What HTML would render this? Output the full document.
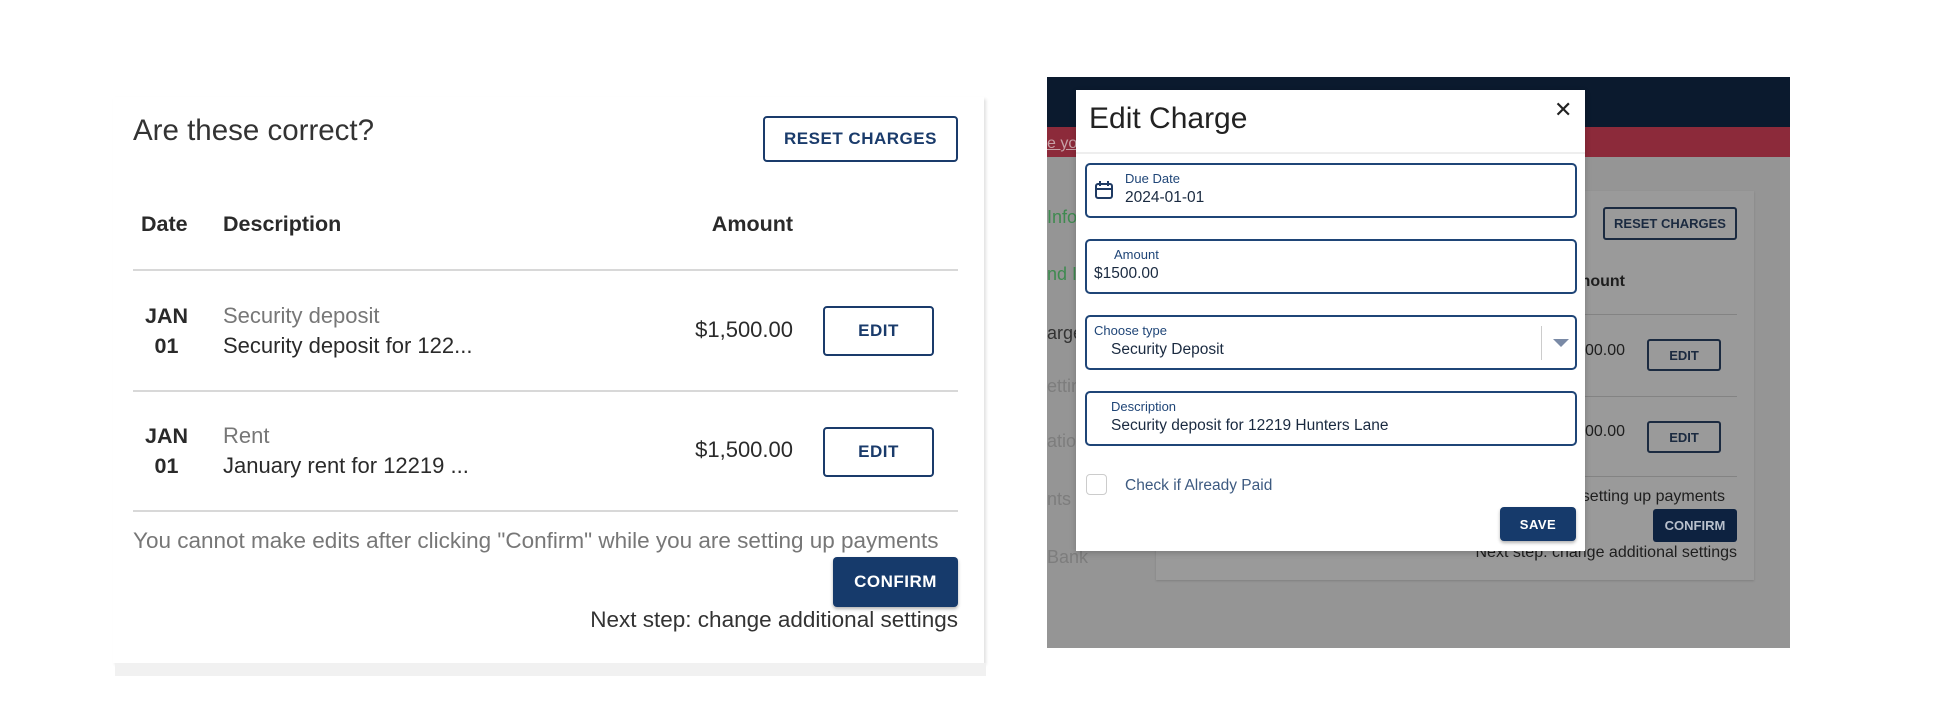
<!DOCTYPE html>
<html><head><meta charset="utf-8"><style>
*{margin:0;padding:0;box-sizing:border-box}
body{width:1953px;height:724px;background:#fff;position:relative;overflow:hidden;font-family:"Liberation Sans",sans-serif;color:#2a2a2a}
.a{position:absolute;white-space:nowrap}
.btnO{position:absolute;border:2px solid #1a3b6b;border-radius:4px;color:#1a3b6b;font-weight:bold;display:flex;align-items:center;justify-content:center;letter-spacing:.5px;background:#fff}
.btnF{position:absolute;background:#163a6b;border-radius:4px;color:#fff;font-weight:bold;display:flex;align-items:center;justify-content:center;letter-spacing:.5px;box-shadow:0 2px 3px rgba(0,0,0,.3)}
.ln{position:absolute;height:2px;background:#d8d8d8}
.fld{position:absolute;left:1085px;width:492px;height:55px;border:2px solid #1f4577;border-radius:5px;background:#fff}
.lbl{position:absolute;font-size:13px;color:#1f4577}
.val{position:absolute;font-size:15.5px;color:#1a2a40}
</style></head><body>
<!-- left card -->
<div class="a" style="left:113px;top:97px;width:871px;height:566px;background:#fff;box-shadow:2px 2px 3px rgba(0,0,0,.12)"></div>
<div class="a" style="left:115px;top:663px;width:871px;height:13px;background:#f1f1f1"></div>
<div class="a" style="left:133px;top:114px;font-size:29.5px;color:#333">Are these correct?</div>
<div class="btnO" style="left:763px;top:116px;width:195px;height:46px;font-size:17px">RESET CHARGES</div>
<div class="a" style="left:141px;top:212px;font-size:21.5px;font-weight:bold">Date</div>
<div class="a" style="left:223px;top:212px;font-size:21.5px;font-weight:bold">Description</div>
<div class="a" style="right:1160px;top:212px;font-size:21.5px;font-weight:bold">Amount</div>
<div class="ln" style="left:133px;top:269px;width:825px"></div>
<div class="a" style="left:145px;top:301px;font-size:21.5px;font-weight:bold;text-align:center;line-height:30px">JAN<br>01</div>
<div class="a" style="left:223px;top:301px;font-size:22px;color:#777;line-height:30px">Security deposit</div>
<div class="a" style="left:223px;top:331px;font-size:22px;line-height:30px">Security deposit for 122...</div>
<div class="a" style="right:1160px;top:317px;font-size:22px;line-height:26px">$1,500.00</div>
<div class="btnO" style="left:823px;top:306px;width:111px;height:50px;font-size:17px">EDIT</div>
<div class="ln" style="left:133px;top:390px;width:825px"></div>
<div class="a" style="left:145px;top:421px;font-size:21.5px;font-weight:bold;text-align:center;line-height:30px">JAN<br>01</div>
<div class="a" style="left:223px;top:421px;font-size:22px;color:#777;line-height:30px">Rent</div>
<div class="a" style="left:223px;top:451px;font-size:22px;line-height:30px">January rent for 12219 ...</div>
<div class="a" style="right:1160px;top:437px;font-size:22px;line-height:26px">$1,500.00</div>
<div class="btnO" style="left:823px;top:427px;width:111px;height:50px;font-size:17px">EDIT</div>
<div class="ln" style="left:133px;top:510px;width:825px"></div>
<div class="a" style="left:133px;top:528px;font-size:22.5px;color:#777">You cannot make edits after clicking "Confirm" while you are setting up payments</div>
<div class="btnF" style="left:833px;top:557px;width:125px;height:50px;font-size:17px">CONFIRM</div>
<div class="a" style="right:995px;top:607px;font-size:22.5px;color:#333">Next step: change additional settings</div>

<!-- right screenshot -->
<div class="a" style="left:1047px;top:77px;width:743px;height:571px;background:#959595;overflow:hidden">
 <div class="a" style="left:0;top:0;width:743px;height:50px;background:#0b1a2e"></div>
 <div class="a" style="left:0;top:50px;width:743px;height:30px;background:#8c2a3a"></div>
 <div class="a" style="left:0;top:58px;font-size:16px;color:#c6a0a6;text-decoration:underline">e you</div>
 <div class="a" style="left:0;top:130px;font-size:18px;color:#3f8a50">Info</div>
 <div class="a" style="left:0;top:187px;font-size:18px;color:#3f8a50">nd I</div>
 <div class="a" style="left:0;top:246px;font-size:18px;color:#333">arge</div>
 <div class="a" style="left:0;top:299px;font-size:18px;color:#7d7d7d">ettin</div>
 <div class="a" style="left:0;top:354px;font-size:18px;color:#7d7d7d">atio</div>
 <div class="a" style="left:0;top:412px;font-size:18px;color:#7d7d7d">nts</div>
 <div class="a" style="left:0;top:470px;font-size:18px;color:#7d7d7d">Bank</div>
 <div class="a" style="left:109px;top:114px;width:598px;height:389px;background:#9a9a9a;box-shadow:0 1px 2px rgba(0,0,0,.15)"></div>
 <div class="a" style="left:556px;top:130px;width:134px;height:33px;border:2px solid #1b2a40;border-radius:3px;font-size:13px;font-weight:bold;color:#1b2a40;display:flex;align-items:center;justify-content:center">RESET CHARGES</div>
 <div class="a" style="right:165px;top:196px;font-size:16px;font-weight:bold;color:#1e1e1e">Amount</div>
 <div class="a" style="left:500px;top:237px;width:190px;height:1px;background:#838383"></div>
 <div class="a" style="left:500px;top:319px;width:190px;height:1px;background:#838383"></div>
 <div class="a" style="left:500px;top:399px;width:190px;height:1px;background:#838383"></div>
 <div class="a" style="right:165px;top:265px;font-size:16px;color:#1e1e1e">$1,500.00</div>
 <div class="a" style="right:165px;top:346px;font-size:16px;color:#1e1e1e">$1,500.00</div>
 <div class="a" style="left:600px;top:262px;width:74px;height:32px;border:2px solid #1b2a40;border-radius:3px;font-size:13px;font-weight:bold;color:#1b2a40;display:flex;align-items:center;justify-content:center">EDIT</div>
 <div class="a" style="left:600px;top:344px;width:74px;height:32px;border:2px solid #1b2a40;border-radius:3px;font-size:13px;font-weight:bold;color:#1b2a40;display:flex;align-items:center;justify-content:center">EDIT</div>
 <div class="a" style="right:65px;top:411px;font-size:16px;color:#1e1e1e">while you are setting up payments</div>
 <div class="a" style="left:606px;top:432px;width:84px;height:33px;background:#0d2240;border-radius:3px;font-size:13px;font-weight:bold;color:#b8c0cc;display:flex;align-items:center;justify-content:center">CONFIRM</div>
 <div class="a" style="right:53px;top:467px;font-size:16px;color:#1e1e1e">Next step: change additional settings</div>
</div>

<!-- modal -->
<div class="a" style="left:1076px;top:90px;width:509px;height:461px;background:#fff;box-shadow:0 2px 6px rgba(0,0,0,.2)"></div>
<div class="a" style="left:1089px;top:102px;font-size:30px;color:#222">Edit Charge</div>
<div class="a" style="left:1554px;top:97px;font-size:22px;color:#222">✕</div>
<div class="a" style="left:1076px;top:152px;width:509px;height:2px;background:#eee"></div>

<div class="fld" style="top:163px">
 <svg class="a" style="left:7px;top:15px" width="20" height="20" viewBox="0 0 20 20" fill="none" stroke="#1f3a63" stroke-width="2"><rect x="2" y="4" width="16" height="14" rx="2"/><line x1="2" y1="9" x2="18" y2="9"/><line x1="6" y1="1" x2="6" y2="6"/><line x1="14" y1="1" x2="14" y2="6"/></svg>
 <div class="lbl" style="left:38px;top:6px">Due Date</div>
 <div class="val" style="left:38px;top:24px">2024-01-01</div>
</div>
<div class="fld" style="top:239px">
 <div class="lbl" style="left:27px;top:6px">Amount</div>
 <div class="val" style="left:7px;top:24px">$1500.00</div>
</div>
<div class="fld" style="top:315px">
 <div class="lbl" style="left:7px;top:6px">Choose type</div>
 <div class="val" style="left:24px;top:24px">Security Deposit</div>
 <div class="a" style="left:454px;top:9px;width:1px;height:34px;background:#ccc"></div>
 <div class="a" style="left:466px;top:22px;width:0;height:0;border-left:8px solid transparent;border-right:8px solid transparent;border-top:8px solid #7a8aa6"></div>
</div>
<div class="fld" style="top:391px">
 <div class="lbl" style="left:24px;top:6px">Description</div>
 <div class="val" style="left:24px;top:24px">Security deposit for 12219 Hunters Lane</div>
</div>
<div class="a" style="left:1086px;top:474px;width:21px;height:21px;border:1.5px solid #ccc;border-radius:4px"></div>
<div class="a" style="left:1125px;top:477px;font-size:15.5px;color:#3d5a80">Check if Already Paid</div>
<div class="btnF" style="left:1500px;top:507px;width:76px;height:34px;font-size:13px">SAVE</div>
</body></html>
